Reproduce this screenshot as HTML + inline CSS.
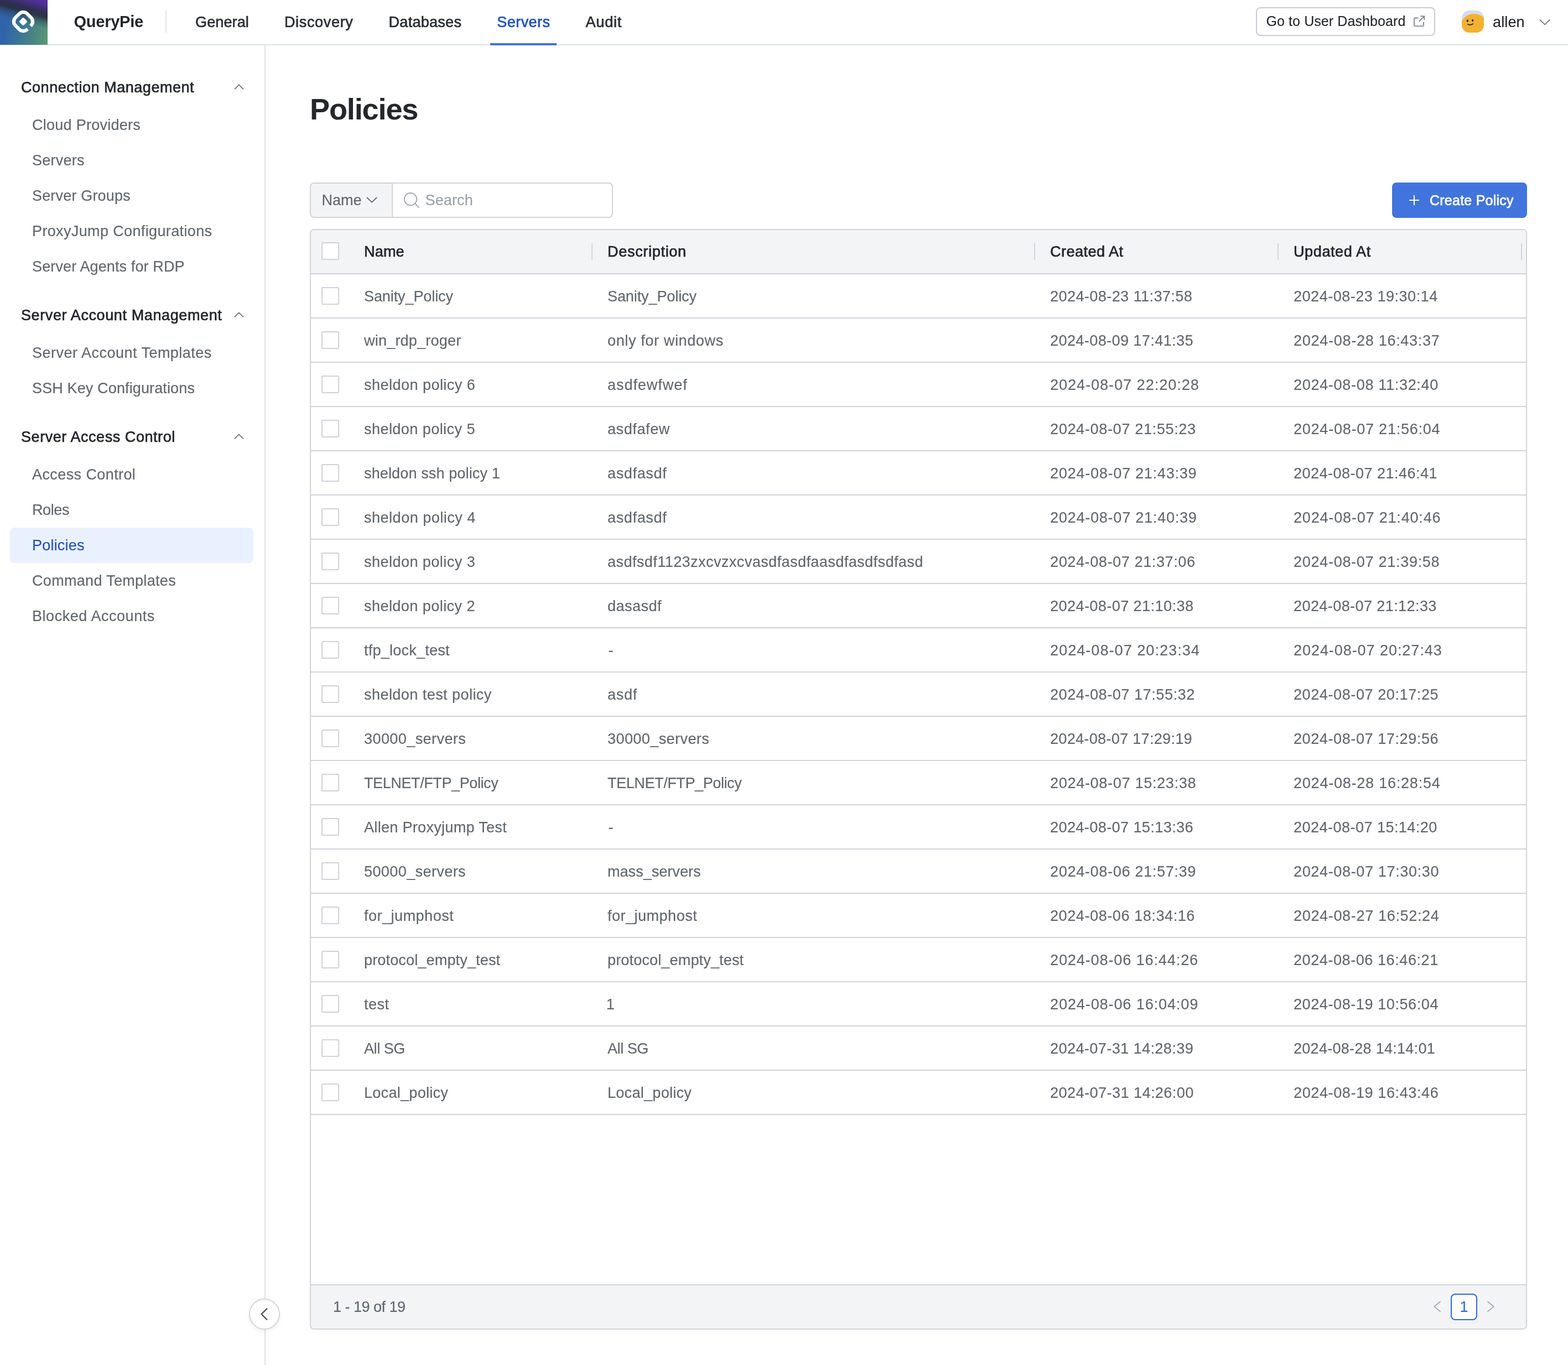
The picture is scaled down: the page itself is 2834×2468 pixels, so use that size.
<!DOCTYPE html>
<html lang="en"><head><meta charset="utf-8"><title>QueryPie - Policies</title>
<style>
*{box-sizing:border-box;margin:0;padding:0}
html,body{width:2834px;height:2468px;overflow:hidden;background:#fff}
body{font-family:"Liberation Sans",sans-serif;font-size:26px;line-height:1;color:#61666c;position:relative;will-change:transform}
span{white-space:pre;display:inline-block}
svg{display:block;position:absolute;overflow:visible}
.hdr{position:absolute;left:0;top:0;width:2834px;height:82px;border-bottom:2px solid #dfe2e7;background:#fff}
.logo{position:absolute;left:0;top:0;width:86px;height:81px;
 background:
  linear-gradient(196deg,rgba(90,48,162,1) 0%,rgba(78,46,146,.97) 9%,rgba(44,42,74,.94) 24%,rgba(38,44,62,.88) 31%,rgba(40,56,78,.4) 40%,rgba(40,60,80,0) 51%),
  linear-gradient(100deg,#2f62ab 0%,#2f64aa 18%,#3f7b8f 55%,#4d8b7c 80%,#5a9a72 100%);}
.brand{position:absolute;left:133.5px;top:0;height:78px;line-height:78px;color:#24272b}
.hdiv{position:absolute;left:299px;top:19px;width:2px;height:40px;background:#e3e5e9}
.tabs{position:absolute;left:341px;top:0;height:82px;display:flex}
.tab{padding:0 12px;margin-right:40px;height:82px;line-height:80px;color:#2b2f33}
.tab.on{color:#1f50be;border-bottom:4px solid #4073dc;width:120px;margin-right:40.3px}
.udb{position:absolute;left:2270px;top:13px;width:324px;height:52px;border:2px solid #c9ccd2;border-radius:8px;
 padding-left:16.5px;line-height:46px;color:#24272b;background:#fff}
.avatar{position:absolute;left:2642px;top:19px;width:40px;height:40px;border-radius:14px;background:#d5dde9;overflow:hidden}
.uname{position:absolute;left:2698px;top:0;height:80px;line-height:80px;color:#24272b}
.side{position:absolute;left:0;top:82px;width:480px;height:2386px;border-right:2px solid #dfe2e7;padding-top:40px;background:#fff}
.sec{margin-bottom:20px}
.sec-h{position:relative;height:72px;line-height:72px;padding-left:38px;color:#24272b}
.it{margin-left:18px;width:440px;height:64px;line-height:64px;padding-left:40px;border-radius:8px}
.it.on{background:#eaf1fe;color:#1f50be}
.collapse{position:absolute;left:450px;top:2348px;width:56px;height:56px;border-radius:50%;border:2px solid #d3d5da;background:#fff;
 box-shadow:0 3px 6px rgba(0,0,0,.07)}
.main{position:absolute;left:480px;top:82px;width:2354px;height:2386px}
h1{position:absolute;left:80px;top:80px;height:72px;line-height:72px;font-weight:normal;color:#24272b}
.search{position:absolute;left:80px;top:248px;width:548px;height:64px;border:2px solid #d1d3d8;border-radius:8px;background:#fff;overflow:hidden}
.search .sel{position:absolute;left:0;top:0;width:148px;height:60px;line-height:60px;padding-left:19.5px;background:#f3f4f6;border-right:2px solid #d1d3d8;color:#61666c}
.search .ph{position:absolute;left:206.5px;top:0;height:60px;line-height:60px;color:#9ca1a9}
.create{position:absolute;left:2036px;top:248px;width:244px;height:64px;border-radius:8px;background:#4174dd;color:#fff;line-height:64px}
.create span{position:absolute;left:68px;top:0}
.tbl{position:absolute;left:80px;top:332px;width:2200px;height:1990px;border:2px solid #d1d3d8;border-radius:8px;background:#fff;overflow:hidden}
.tr{position:relative;height:80px;border-bottom:2px solid #d1d3d8;display:flex;line-height:78px}
.th{background:#f3f4f6;color:#24272b}
.th .cb{top:22px}
.c0{position:relative;width:69px;height:78px;flex:none}
.cb{position:absolute;left:19px;top:23px;width:32px;height:32px;border:2px solid #d0d2d7;border-radius:2.5px;background:#fff}
.c{position:relative;flex:none;height:78px;padding-left:27px;overflow:hidden;line-height:80px}
.th .c{line-height:78px}
.w1{width:440px}.w2{width:800px}
.th .c::after{content:"";position:absolute;right:0;top:24px;width:2px;height:30px;background:#d3d5da}
.tf{position:absolute;left:0;bottom:0;width:2196px;height:80px;border-top:2px solid #d1d3d8;background:#f3f4f6;line-height:78px;padding-left:40px}
.pg{position:absolute;left:2060px;top:15px;width:48px;height:48px;border:2px solid #2f66d8;border-radius:8px;background:#fff;color:#2f66d8;line-height:44px;text-align:center}
</style></head>
<body>
<header class="hdr"><div class="logo"><svg style="left:0px;top:0px" width="86" height="81" viewBox="0 0 86 81"><g transform="translate(42 39) rotate(45)"><path d="M15 3.8V5A10 10 0 0 1 5 15H-5A10 10 0 0 1 -15 5V-5A10 10 0 0 1 -5 -15H5A10 10 0 0 1 15 -5V-3.8" fill="none" stroke="#fff" stroke-width="6.2"/><rect x="-5.600" y="-5.600" width="11.200" height="11.200" rx="2.600" fill="#fff"/></g></svg></div><div class="brand"><span style="font-size:29.12px;font-weight:700;letter-spacing:-0.303px;">QueryPie</span></div><div class="hdiv"></div><nav class="tabs"><div class="tab"><span style="font-size:27.04px;font-weight:400;letter-spacing:0.103px;-webkit-text-stroke:0.7px currentColor;">General</span></div><div class="tab"><span style="font-size:27.04px;font-weight:400;letter-spacing:0.667px;-webkit-text-stroke:0.7px currentColor;">Discovery</span></div><div class="tab"><span style="font-size:27.04px;font-weight:400;letter-spacing:0.267px;-webkit-text-stroke:0.7px currentColor;">Databases</span></div><div class="tab on"><span style="font-size:27.04px;font-weight:400;letter-spacing:0.453px;-webkit-text-stroke:0.7px currentColor;">Servers</span></div><div class="tab"><span style="font-size:27.04px;font-weight:400;letter-spacing:0.784px;-webkit-text-stroke:0.7px currentColor;">Audit</span></div></nav><div class="udb"><span style="font-size:24.96px;font-weight:400;letter-spacing:0.113px;-webkit-text-stroke:0.15px currentColor;">Go to User Dashboard</span><svg style="left:283px;top:13px" width="22" height="22" viewBox="0 0 22 22"><path d="M8.500 4.400H2.500A1.500 1.500 0 0 0 1 5.900V17.700A1.500 1.500 0 0 0 2.500 19.200H16.500A1.500 1.500 0 0 0 18 17.700V11.500" fill="none" stroke="#70757d" stroke-width="1.600"/><path d="M12.300 1.200H19.200V8.100M19.200 1.200L9.800 10.600" fill="none" stroke="#70757d" stroke-width="1.600"/></svg></div><div class="avatar"><svg style="left:0px;top:0px" width="40" height="40" viewBox="0 0 40 40"><circle cx="22.400" cy="31.100" r="25.200" fill="#f2b130"/><ellipse cx="10.300" cy="18.700" rx="1.500" ry="2.100" fill="#111"/><ellipse cx="19.600" cy="18" rx="1.500" ry="1.900" fill="#111"/><path d="M10.600 24.700Q14.600 27.500 20.300 24.100" fill="none" stroke="#111" stroke-width="1.500" stroke-linecap="round"/></svg></div><div class="uname"><span style="font-size:27.04px;font-weight:400;letter-spacing:0.119px;-webkit-text-stroke:0.15px currentColor;">allen</span></div><svg style="left:2782px;top:35px" width="20" height="11" viewBox="0 0 20 11"><polyline points="1,0.7 10.1,9.299999999999999 19.2,0.7" fill="none" stroke="#6b7179" stroke-width="1.8" stroke-linecap="butt" stroke-linejoin="miter"/></svg></header>
<aside class="side"><section class="sec"><div class="sec-h"><span style="font-size:27.04px;font-weight:400;letter-spacing:0.529px;-webkit-text-stroke:0.7px currentColor;">Connection Management</span><svg style="left:423px;top:31px" width="18" height="10" viewBox="0 0 18 10"><polyline points="0.8,8.3 8.850000000000001,0.4 16.900000000000002,8.3" fill="none" stroke="#6b7179" stroke-width="1.8" stroke-linecap="butt" stroke-linejoin="miter"/></svg></div><div class="it"><span style="font-size:27.04px;font-weight:400;letter-spacing:0.248px;-webkit-text-stroke:0.15px currentColor;">Cloud Providers</span></div><div class="it"><span style="font-size:27.04px;font-weight:400;letter-spacing:0.239px;-webkit-text-stroke:0.15px currentColor;">Servers</span></div><div class="it"><span style="font-size:27.04px;font-weight:400;letter-spacing:0.153px;-webkit-text-stroke:0.15px currentColor;">Server Groups</span></div><div class="it"><span style="font-size:27.04px;font-weight:400;letter-spacing:0.350px;-webkit-text-stroke:0.15px currentColor;">ProxyJump Configurations</span></div><div class="it"><span style="font-size:27.04px;font-weight:400;letter-spacing:0.110px;-webkit-text-stroke:0.15px currentColor;">Server Agents for RDP</span></div></section><section class="sec"><div class="sec-h"><span style="font-size:27.04px;font-weight:400;letter-spacing:0.591px;-webkit-text-stroke:0.7px currentColor;">Server Account Management</span><svg style="left:423px;top:31px" width="18" height="10" viewBox="0 0 18 10"><polyline points="0.8,8.3 8.850000000000001,0.4 16.900000000000002,8.3" fill="none" stroke="#6b7179" stroke-width="1.8" stroke-linecap="butt" stroke-linejoin="miter"/></svg></div><div class="it"><span style="font-size:27.04px;font-weight:400;letter-spacing:0.471px;-webkit-text-stroke:0.15px currentColor;">Server Account Templates</span></div><div class="it"><span style="font-size:27.04px;font-weight:400;letter-spacing:0.117px;-webkit-text-stroke:0.15px currentColor;">SSH Key Configurations</span></div></section><section class="sec"><div class="sec-h"><span style="font-size:27.04px;font-weight:400;letter-spacing:0.540px;-webkit-text-stroke:0.7px currentColor;">Server Access Control</span><svg style="left:423px;top:31px" width="18" height="10" viewBox="0 0 18 10"><polyline points="0.8,8.3 8.850000000000001,0.4 16.900000000000002,8.3" fill="none" stroke="#6b7179" stroke-width="1.8" stroke-linecap="butt" stroke-linejoin="miter"/></svg></div><div class="it"><span style="font-size:27.04px;font-weight:400;letter-spacing:0.392px;-webkit-text-stroke:0.15px currentColor;">Access Control</span></div><div class="it"><span style="font-size:27.04px;font-weight:400;letter-spacing:-0.397px;-webkit-text-stroke:0.15px currentColor;">Roles</span></div><div class="it on"><span style="font-size:27.04px;font-weight:400;letter-spacing:0.191px;-webkit-text-stroke:0.15px currentColor;">Policies</span></div><div class="it"><span style="font-size:27.04px;font-weight:400;letter-spacing:0.297px;-webkit-text-stroke:0.15px currentColor;">Command Templates</span></div><div class="it"><span style="font-size:27.04px;font-weight:400;letter-spacing:0.525px;-webkit-text-stroke:0.15px currentColor;">Blocked Accounts</span></div></section></aside><div class="collapse"><svg style="left:0px;top:0px" width="52" height="52" viewBox="0 0 52 52"><polyline points="31.0,15.5 20.6,26.0 31.0,36.5" fill="none" stroke="#4b5159" stroke-width="2.4" stroke-linecap="butt" stroke-linejoin="miter"/></svg></div>
<main class="main"><h1><span style="font-size:54.08px;font-weight:700;letter-spacing:-1.143px;position:relative;top:-1px;">Policies</span></h1><div class="search"><div class="sel"><span style="font-size:27.04px;font-weight:400;letter-spacing:0.004px;-webkit-text-stroke:0.15px currentColor;">Name</span><svg style="left:100px;top:25px" width="20" height="11" viewBox="0 0 20 11"><polyline points="1,0 10.1,8.6 19.2,0" fill="none" stroke="#61666c" stroke-width="1.8" stroke-linecap="butt" stroke-linejoin="miter"/></svg></div><svg style="left:168px;top:15.9px" width="28" height="28" viewBox="0 0 28 28"><circle cx="12" cy="12" r="11.200" fill="none" stroke="#9ea3ab" stroke-width="1.700"/><path d="M19.900 19.900L27.500 27.600" stroke="#9ea3ab" stroke-width="1.700" fill="none"/></svg><div class="ph"><span style="font-size:27.04px;font-weight:400;letter-spacing:0.104px;-webkit-text-stroke:0.15px currentColor;">Search</span></div></div><div class="create"><svg style="left:31px;top:23px" width="18" height="18" viewBox="0 0 18 18"><path d="M9 0V18M0 9H18" stroke="#fff" stroke-width="2" fill="none"/></svg><span style="font-size:24.96px;font-weight:400;letter-spacing:0.266px;-webkit-text-stroke:0.7px currentColor;">Create Policy</span></div><div class="tbl"><div class="tr th"><div class="c0"><div class="cb"></div></div><div class="c w1"><span style="font-size:27.04px;font-weight:400;letter-spacing:0.172px;-webkit-text-stroke:0.7px currentColor;">Name</span></div><div class="c w2"><span style="font-size:27.04px;font-weight:400;letter-spacing:0.689px;-webkit-text-stroke:0.7px currentColor;">Description</span></div><div class="c w1"><span style="font-size:27.04px;font-weight:400;letter-spacing:0.478px;-webkit-text-stroke:0.7px currentColor;">Created At</span></div><div class="c w1"><span style="font-size:27.04px;font-weight:400;letter-spacing:0.598px;-webkit-text-stroke:0.7px currentColor;">Updated At</span></div></div><div class="tr"><div class="c0"><div class="cb"></div></div><div class="c w1"><span style="font-size:27.04px;font-weight:400;letter-spacing:-0.109px;-webkit-text-stroke:0.15px currentColor;">Sanity_Policy</span></div><div class="c w2"><span style="font-size:27.04px;font-weight:400;letter-spacing:-0.109px;-webkit-text-stroke:0.15px currentColor;">Sanity_Policy</span></div><div class="c w1"><span style="font-size:27.04px;font-weight:400;letter-spacing:0.431px;-webkit-text-stroke:0.15px currentColor;">2024-08-23 11:37:58</span></div><div class="c w1"><span style="font-size:27.04px;font-weight:400;letter-spacing:0.514px;-webkit-text-stroke:0.15px currentColor;">2024-08-23 19:30:14</span></div></div><div class="tr"><div class="c0"><div class="cb"></div></div><div class="c w1"><span style="font-size:27.04px;font-weight:400;letter-spacing:0.202px;-webkit-text-stroke:0.15px currentColor;">win_rdp_roger</span></div><div class="c w2"><span style="font-size:27.04px;font-weight:400;letter-spacing:0.625px;-webkit-text-stroke:0.15px currentColor;">only for windows</span></div><div class="c w1"><span style="font-size:27.04px;font-weight:400;letter-spacing:0.414px;-webkit-text-stroke:0.15px currentColor;">2024-08-09 17:41:35</span></div><div class="c w1"><span style="font-size:27.04px;font-weight:400;letter-spacing:0.715px;-webkit-text-stroke:0.15px currentColor;">2024-08-28 16:43:37</span></div></div><div class="tr"><div class="c0"><div class="cb"></div></div><div class="c w1"><span style="font-size:27.04px;font-weight:400;letter-spacing:0.461px;-webkit-text-stroke:0.15px currentColor;">sheldon policy 6</span></div><div class="c w2"><span style="font-size:27.04px;font-weight:400;letter-spacing:0.944px;-webkit-text-stroke:0.15px currentColor;">asdfewfwef</span></div><div class="c w1"><span style="font-size:27.04px;font-weight:400;letter-spacing:0.985px;-webkit-text-stroke:0.15px currentColor;">2024-08-07 22:20:28</span></div><div class="c w1"><span style="font-size:27.04px;font-weight:400;letter-spacing:0.683px;-webkit-text-stroke:0.15px currentColor;">2024-08-08 11:32:40</span></div></div><div class="tr"><div class="c0"><div class="cb"></div></div><div class="c w1"><span style="font-size:27.04px;font-weight:400;letter-spacing:0.441px;-webkit-text-stroke:0.15px currentColor;">sheldon policy 5</span></div><div class="c w2"><span style="font-size:27.04px;font-weight:400;letter-spacing:0.586px;-webkit-text-stroke:0.15px currentColor;">asdfafew</span></div><div class="c w1"><span style="font-size:27.04px;font-weight:400;letter-spacing:0.672px;-webkit-text-stroke:0.15px currentColor;">2024-08-07 21:55:23</span></div><div class="c w1"><span style="font-size:27.04px;font-weight:400;letter-spacing:0.756px;-webkit-text-stroke:0.15px currentColor;">2024-08-07 21:56:04</span></div></div><div class="tr"><div class="c0"><div class="cb"></div></div><div class="c w1"><span style="font-size:27.04px;font-weight:400;letter-spacing:0.120px;-webkit-text-stroke:0.15px currentColor;">sheldon ssh policy 1</span></div><div class="c w2"><span style="font-size:27.04px;font-weight:400;letter-spacing:0.643px;-webkit-text-stroke:0.15px currentColor;">asdfasdf</span></div><div class="c w1"><span style="font-size:27.04px;font-weight:400;letter-spacing:0.751px;-webkit-text-stroke:0.15px currentColor;">2024-08-07 21:43:39</span></div><div class="c w1"><span style="font-size:27.04px;font-weight:400;letter-spacing:0.475px;-webkit-text-stroke:0.15px currentColor;">2024-08-07 21:46:41</span></div></div><div class="tr"><div class="c0"><div class="cb"></div></div><div class="c w1"><span style="font-size:27.04px;font-weight:400;letter-spacing:0.503px;-webkit-text-stroke:0.15px currentColor;">sheldon policy 4</span></div><div class="c w2"><span style="font-size:27.04px;font-weight:400;letter-spacing:0.643px;-webkit-text-stroke:0.15px currentColor;">asdfasdf</span></div><div class="c w1"><span style="font-size:27.04px;font-weight:400;letter-spacing:0.769px;-webkit-text-stroke:0.15px currentColor;">2024-08-07 21:40:39</span></div><div class="c w1"><span style="font-size:27.04px;font-weight:400;letter-spacing:0.808px;-webkit-text-stroke:0.15px currentColor;">2024-08-07 21:40:46</span></div></div><div class="tr"><div class="c0"><div class="cb"></div></div><div class="c w1"><span style="font-size:27.04px;font-weight:400;letter-spacing:0.457px;-webkit-text-stroke:0.15px currentColor;">sheldon policy 3</span></div><div class="c w2"><span style="font-size:27.04px;font-weight:400;letter-spacing:0.435px;-webkit-text-stroke:0.15px currentColor;">asdfsdf1123zxcvzxcvasdfasdfaasdfasdfsdfasd</span></div><div class="c w1"><span style="font-size:27.04px;font-weight:400;letter-spacing:0.613px;-webkit-text-stroke:0.15px currentColor;">2024-08-07 21:37:06</span></div><div class="c w1"><span style="font-size:27.04px;font-weight:400;letter-spacing:0.701px;-webkit-text-stroke:0.15px currentColor;">2024-08-07 21:39:58</span></div></div><div class="tr"><div class="c0"><div class="cb"></div></div><div class="c w1"><span style="font-size:27.04px;font-weight:400;letter-spacing:0.444px;-webkit-text-stroke:0.15px currentColor;">sheldon policy 2</span></div><div class="c w2"><span style="font-size:27.04px;font-weight:400;letter-spacing:0.489px;-webkit-text-stroke:0.15px currentColor;">dasasdf</span></div><div class="c w1"><span style="font-size:27.04px;font-weight:400;letter-spacing:0.440px;-webkit-text-stroke:0.15px currentColor;">2024-08-07 21:10:38</span></div><div class="c w1"><span style="font-size:27.04px;font-weight:400;letter-spacing:0.410px;-webkit-text-stroke:0.15px currentColor;">2024-08-07 21:12:33</span></div></div><div class="tr"><div class="c0"><div class="cb"></div></div><div class="c w1"><span style="font-size:27.04px;font-weight:400;letter-spacing:0.222px;-webkit-text-stroke:0.15px currentColor;">tfp_lock_test</span></div><div class="c w2"><span style="font-size:27.04px;font-weight:400;margin:0 1.48px;-webkit-text-stroke:0.15px currentColor;">-</span></div><div class="c w1"><span style="font-size:27.04px;font-weight:400;letter-spacing:1.044px;-webkit-text-stroke:0.15px currentColor;">2024-08-07 20:23:34</span></div><div class="c w1"><span style="font-size:27.04px;font-weight:400;letter-spacing:0.927px;-webkit-text-stroke:0.15px currentColor;">2024-08-07 20:27:43</span></div></div><div class="tr"><div class="c0"><div class="cb"></div></div><div class="c w1"><span style="font-size:27.04px;font-weight:400;letter-spacing:0.440px;-webkit-text-stroke:0.15px currentColor;">sheldon test policy</span></div><div class="c w2"><span style="font-size:27.04px;font-weight:400;letter-spacing:0.695px;-webkit-text-stroke:0.15px currentColor;">asdf</span></div><div class="c w1"><span style="font-size:27.04px;font-weight:400;letter-spacing:0.566px;-webkit-text-stroke:0.15px currentColor;">2024-08-07 17:55:32</span></div><div class="c w1"><span style="font-size:27.04px;font-weight:400;letter-spacing:0.586px;-webkit-text-stroke:0.15px currentColor;">2024-08-07 20:17:25</span></div></div><div class="tr"><div class="c0"><div class="cb"></div></div><div class="c w1"><span style="font-size:27.04px;font-weight:400;letter-spacing:0.413px;-webkit-text-stroke:0.15px currentColor;">30000_servers</span></div><div class="c w2"><span style="font-size:27.04px;font-weight:400;letter-spacing:0.413px;-webkit-text-stroke:0.15px currentColor;">30000_servers</span></div><div class="c w1"><span style="font-size:27.04px;font-weight:400;letter-spacing:0.310px;-webkit-text-stroke:0.15px currentColor;">2024-08-07 17:29:19</span></div><div class="c w1"><span style="font-size:27.04px;font-weight:400;letter-spacing:0.586px;-webkit-text-stroke:0.15px currentColor;">2024-08-07 17:29:56</span></div></div><div class="tr"><div class="c0"><div class="cb"></div></div><div class="c w1"><span style="font-size:27.04px;font-weight:400;letter-spacing:-0.417px;-webkit-text-stroke:0.15px currentColor;">TELNET/FTP_Policy</span></div><div class="c w2"><span style="font-size:27.04px;font-weight:400;letter-spacing:-0.417px;-webkit-text-stroke:0.15px currentColor;">TELNET/FTP_Policy</span></div><div class="c w1"><span style="font-size:27.04px;font-weight:400;letter-spacing:0.697px;-webkit-text-stroke:0.15px currentColor;">2024-08-07 15:23:38</span></div><div class="c w1"><span style="font-size:27.04px;font-weight:400;letter-spacing:0.763px;-webkit-text-stroke:0.15px currentColor;">2024-08-28 16:28:54</span></div></div><div class="tr"><div class="c0"><div class="cb"></div></div><div class="c w1"><span style="font-size:27.04px;font-weight:400;letter-spacing:0.303px;-webkit-text-stroke:0.15px currentColor;">Allen Proxyjump Test</span></div><div class="c w2"><span style="font-size:27.04px;font-weight:400;margin:0 1.48px;-webkit-text-stroke:0.15px currentColor;">-</span></div><div class="c w1"><span style="font-size:27.04px;font-weight:400;letter-spacing:0.421px;-webkit-text-stroke:0.15px currentColor;">2024-08-07 15:13:36</span></div><div class="c w1"><span style="font-size:27.04px;font-weight:400;letter-spacing:0.464px;-webkit-text-stroke:0.15px currentColor;">2024-08-07 15:14:20</span></div></div><div class="tr"><div class="c0"><div class="cb"></div></div><div class="c w1"><span style="font-size:27.04px;font-weight:400;letter-spacing:0.394px;-webkit-text-stroke:0.15px currentColor;">50000_servers</span></div><div class="c w2"><span style="font-size:27.04px;font-weight:400;letter-spacing:0.025px;-webkit-text-stroke:0.15px currentColor;">mass_servers</span></div><div class="c w1"><span style="font-size:27.04px;font-weight:400;letter-spacing:0.683px;-webkit-text-stroke:0.15px currentColor;">2024-08-06 21:57:39</span></div><div class="c w1"><span style="font-size:27.04px;font-weight:400;letter-spacing:0.639px;-webkit-text-stroke:0.15px currentColor;">2024-08-07 17:30:30</span></div></div><div class="tr"><div class="c0"><div class="cb"></div></div><div class="c w1"><span style="font-size:27.04px;font-weight:400;letter-spacing:0.492px;-webkit-text-stroke:0.15px currentColor;">for_jumphost</span></div><div class="c w2"><span style="font-size:27.04px;font-weight:400;letter-spacing:0.492px;-webkit-text-stroke:0.15px currentColor;">for_jumphost</span></div><div class="c w1"><span style="font-size:27.04px;font-weight:400;letter-spacing:0.576px;-webkit-text-stroke:0.15px currentColor;">2024-08-06 18:34:16</span></div><div class="c w1"><span style="font-size:27.04px;font-weight:400;letter-spacing:0.658px;-webkit-text-stroke:0.15px currentColor;">2024-08-27 16:52:24</span></div></div><div class="tr"><div class="c0"><div class="cb"></div></div><div class="c w1"><span style="font-size:27.04px;font-weight:400;letter-spacing:0.148px;-webkit-text-stroke:0.15px currentColor;">protocol_empty_test</span></div><div class="c w2"><span style="font-size:27.04px;font-weight:400;letter-spacing:0.148px;-webkit-text-stroke:0.15px currentColor;">protocol_empty_test</span></div><div class="c w1"><span style="font-size:27.04px;font-weight:400;letter-spacing:0.894px;-webkit-text-stroke:0.15px currentColor;">2024-08-06 16:44:26</span></div><div class="c w1"><span style="font-size:27.04px;font-weight:400;letter-spacing:0.567px;-webkit-text-stroke:0.15px currentColor;">2024-08-06 16:46:21</span></div></div><div class="tr"><div class="c0"><div class="cb"></div></div><div class="c w1"><span style="font-size:27.04px;font-weight:400;letter-spacing:0.516px;-webkit-text-stroke:0.15px currentColor;">test</span></div><div class="c w2"><span style="font-size:27.04px;font-weight:400;margin:0 -2.23px;-webkit-text-stroke:0.15px currentColor;">1</span></div><div class="c w1"><span style="font-size:27.04px;font-weight:400;letter-spacing:0.902px;-webkit-text-stroke:0.15px currentColor;">2024-08-06 16:04:09</span></div><div class="c w1"><span style="font-size:27.04px;font-weight:400;letter-spacing:0.579px;-webkit-text-stroke:0.15px currentColor;">2024-08-19 10:56:04</span></div></div><div class="tr"><div class="c0"><div class="cb"></div></div><div class="c w1"><span style="font-size:27.04px;font-weight:400;letter-spacing:-0.445px;-webkit-text-stroke:0.15px currentColor;">All SG</span></div><div class="c w2"><span style="font-size:27.04px;font-weight:400;letter-spacing:-0.445px;-webkit-text-stroke:0.15px currentColor;">All SG</span></div><div class="c w1"><span style="font-size:27.04px;font-weight:400;letter-spacing:0.429px;-webkit-text-stroke:0.15px currentColor;">2024-07-31 14:28:39</span></div><div class="c w1"><span style="font-size:27.04px;font-weight:400;letter-spacing:0.262px;-webkit-text-stroke:0.15px currentColor;">2024-08-28 14:14:01</span></div></div><div class="tr"><div class="c0"><div class="cb"></div></div><div class="c w1"><span style="font-size:27.04px;font-weight:400;letter-spacing:0.277px;-webkit-text-stroke:0.15px currentColor;">Local_policy</span></div><div class="c w2"><span style="font-size:27.04px;font-weight:400;letter-spacing:0.277px;-webkit-text-stroke:0.15px currentColor;">Local_policy</span></div><div class="c w1"><span style="font-size:27.04px;font-weight:400;letter-spacing:0.464px;-webkit-text-stroke:0.15px currentColor;">2024-07-31 14:26:00</span></div><div class="c w1"><span style="font-size:27.04px;font-weight:400;letter-spacing:0.598px;-webkit-text-stroke:0.15px currentColor;">2024-08-19 16:43:46</span></div></div><div class="tf"><span style="font-size:27.04px;font-weight:400;letter-spacing:-0.530px;-webkit-text-stroke:0.15px currentColor;">1 - 19 of 19</span><svg style="left:2029px;top:28px" width="14" height="21" viewBox="0 0 14 21"><polyline points="12.6,1 1.2,10.3 12.6,19.6" fill="none" stroke="#a6aab0" stroke-width="1.9" stroke-linecap="butt" stroke-linejoin="miter"/></svg><div class="pg"><span style="font-size:27.04px;font-weight:400;margin:0 -2.23px;-webkit-text-stroke:0.15px currentColor;">1</span></div><svg style="left:2126px;top:28px" width="14" height="21" viewBox="0 0 14 21"><polyline points="0.4,1 11.8,10.3 0.4,19.6" fill="none" stroke="#a6aab0" stroke-width="1.9" stroke-linecap="butt" stroke-linejoin="miter"/></svg></div></div></main>
</body></html>
